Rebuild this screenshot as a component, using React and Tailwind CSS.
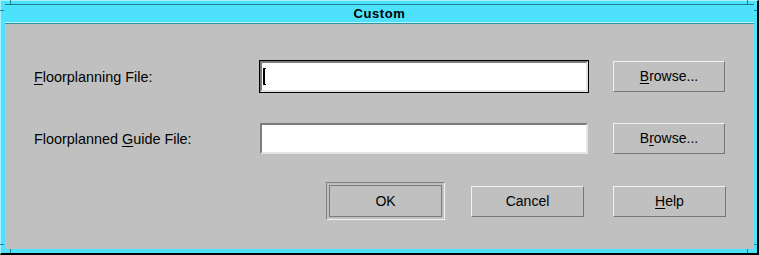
import React from 'react';

const font = { fontFamily: '"Liberation Sans", Arial, sans-serif' };

const Mn = ({ children }) => <span className="underline underline-offset-2">{children}</span>;

// raised motif push button
const PushButton = ({ children, className = '' }) => (
    <div
        className={`flex items-center justify-center border border-t-[#f2f2f2] border-l-[#f2f2f2] border-b-[#767676] border-r-[#767676] text-[14px] text-black ${className}`}
    >
        {children}
    </div>
);

const TextField = ({ focused }) => (
    <div className={`w-[330px] h-[33px] border ${focused ? 'border-black' : 'border-transparent'}`}>
        <div className="h-full border-2 border-t-[#7c7c7c] border-l-[#7c7c7c] border-b-[#e4e4e4] border-r-[#e4e4e4] bg-white flex items-center pl-px">
            {focused && (
                <span className="block w-[3px] h-[17px] border-l-2 border-t border-b border-black" />
            )}
        </div>
    </div>
);

export default function App() {
    return (
        <div className="w-[759px] h-[255px] relative" style={font}>
            <div className="w-full h-full bg-[#4de1fb] border-t border-l border-[#a9f0fd] border-r-2 border-b-2 border-r-black border-b-black pt-[3px] pl-[4px] pr-[3px] pb-[4px] flex flex-col">
                {/* Title bar */}
                <div className="h-[19px] border-t border-t-[#1f7f92] border-b border-b-[#b9f5ff] flex items-center justify-center">
                    <span className="text-[13px] font-bold tracking-[0.6px] text-black leading-none">Custom</span>
                </div>
                {/* Body */}
                <div className="flex-1 bg-[#c0c0c0] border-t border-t-[#2c92a6] pl-[29px] pt-[36px]">
                    <div className="flex items-center h-[33px]">
                        <div className="w-[225px] pt-[3px] text-[14.4px] text-black">
                            <Mn>F</Mn>loorplanning File:
                        </div>
                        <TextField focused />
                        <PushButton className="ml-[24px] w-[112px] h-[31px]">
                            <span>
                                <Mn>B</Mn>rowse...
                            </span>
                        </PushButton>
                    </div>
                    <div className="flex items-center h-[33px] mt-[29px]">
                        <div className="w-[225px] pt-[3px] text-[14.4px] text-black">
                            Floorplanned <Mn>G</Mn>uide File:
                        </div>
                        <TextField />
                        <PushButton className="ml-[24px] w-[112px] h-[31px]">
                            <span>
                                B<Mn>r</Mn>owse...
                            </span>
                        </PushButton>
                    </div>
                    <div className="flex items-center h-[38px] mt-[27px]">
                        <div className="ml-[292px] w-[119px] h-[38px] border border-t-[#808080] border-l-[#808080] border-b-[#f2f2f2] border-r-[#f2f2f2] p-[2px]">
                            <PushButton className="w-full h-full border-[#7a7a7a]! pt-px">OK</PushButton>
                        </div>
                        <PushButton className="ml-[26px] w-[113px] h-[31px] pt-px">Cancel</PushButton>
                        <PushButton className="ml-[29px] w-[113px] h-[31px] pt-px">
                            <span>
                                <Mn>H</Mn>elp
                            </span>
                        </PushButton>
                    </div>
                </div>
            </div>
            {/* frame corner separators */}
            <div className="absolute left-[10px] top-0 w-px h-[4px] bg-[#1f7f92]" />
            <div className="absolute left-[747px] top-0 w-px h-[4px] bg-[#1f7f92]" />
            <div className="absolute left-0 top-[10px] w-[4px] h-px bg-[#1f7f92]" />
            <div className="absolute right-[2px] top-[10px] w-[3px] h-px bg-[#1f7f92]" />
            <div className="absolute left-0 bottom-[10px] w-[4px] h-px bg-[#1f7f92]" />
            <div className="absolute left-[10px] bottom-[2px] w-px h-[4px] bg-[#1f7f92]" />
            <div className="absolute right-[2px] bottom-[10px] w-[3px] h-px bg-[#1f7f92]" />
            <div className="absolute left-[747px] bottom-[2px] w-px h-[4px] bg-[#1f7f92]" />
        </div>
    );
}
